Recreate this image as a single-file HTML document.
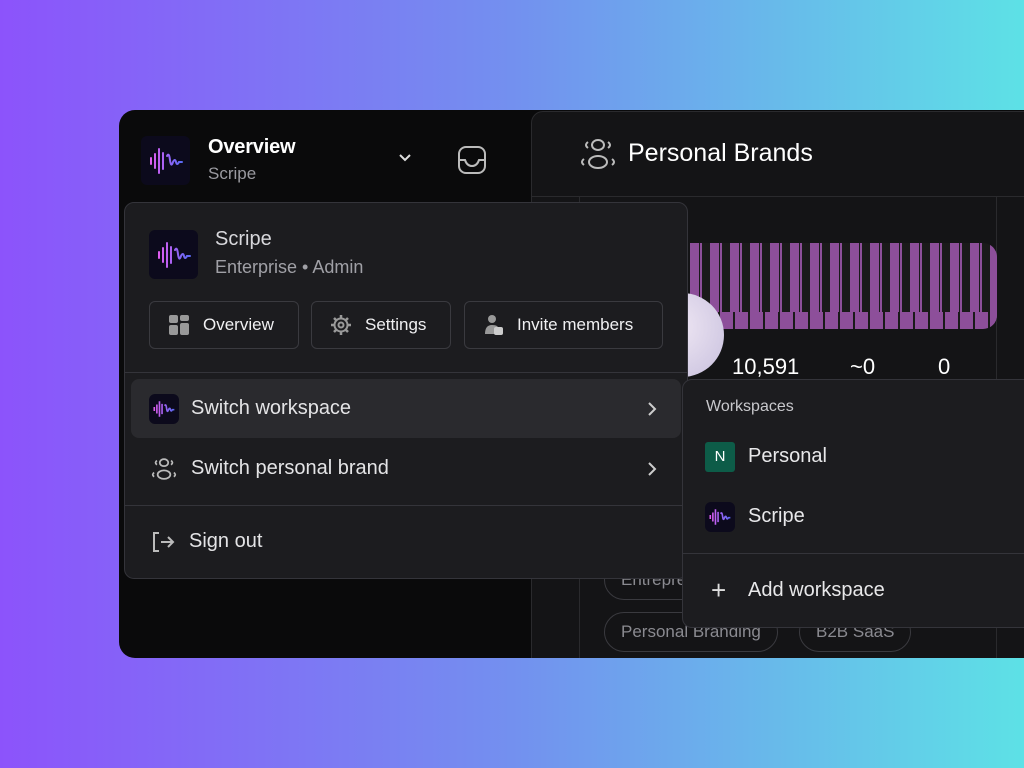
<!DOCTYPE html>
<html><head><meta charset="utf-8"><style>
*{box-sizing:border-box;margin:0;padding:0}
body{width:1024px;height:768px;overflow:hidden;background:linear-gradient(90deg,#8c53fb 0%,#7390ef 50%,#5de1e6 100%);font-family:"Liberation Sans",sans-serif;position:relative;color:#e8e8ea}
.abs{position:absolute}
.win{left:119px;top:110px;width:940px;height:548px;background:#0a0a0b;border-radius:16px;overflow:hidden}
.logo{background:#0c0a1c;border-radius:6px;display:flex;align-items:center;justify-content:center}
.right{left:412px;top:1px;width:520px;height:560px;background:#141416;border:1px solid #2a2a2d;border-radius:12px 0 0 0}
.card{left:460px;top:87px;width:418px;height:470px;border-left:1px solid #2a2a2d;border-right:1px solid #2a2a2d}
.menu{left:124px;top:202px;width:564px;height:377px;background:#1c1c1f;border:1px solid #34343a;border-radius:10px}
.btn{position:absolute;top:98px;height:48px;border:1px solid #3a3a3f;border-radius:6px;display:flex;align-items:center;font-size:17px;color:#f0f0f2}
.row{position:absolute;left:6px;width:550px;height:59px;border-radius:8px;display:flex;align-items:center;font-size:20px;color:#e4e4e6}
.sub{left:682px;top:379px;width:360px;height:249px;background:#1c1c1f;border:1px solid #34343a;border-radius:10px 0 0 10px}
.tag{position:absolute;height:40px;border:1px solid #3a3a3f;border-radius:20px;color:#8a8a90;font-size:17px;padding:0 16px;line-height:38px}
</style></head><body>
<div class="abs win">
<div class="abs right"></div>
<div class="abs" style="left:413px;top:86px;width:500px;height:1px;background:#2a2a2d"></div>
<div class="abs card"></div>
<div class="abs" style="left:571px;top:133px;width:307px;height:86px;border-radius:0 14px 14px 0;overflow:hidden;background:repeating-linear-gradient(90deg,#8d4f9a 0 9px,#1a1a1a 9px 10px,#8d4f9a 10px 12px,#1a1a1a 12px 20px);"></div>
<div class="abs" style="left:571px;top:202px;width:307px;height:17px;border-radius:0 0 14px 0;background:repeating-linear-gradient(90deg,#8d4f9a 0 13px,#1a1a1a 13px 15px)"></div>
<div class="abs" style="left:521px;top:183px;width:84px;height:84px;border-radius:50%;background:radial-gradient(circle at 40% 40%,#f0e8f4,#c8c0de)"></div>
<div class="abs" style="left:613px;top:244px;font-size:22px;color:#fff">10,591</div>
<div class="abs" style="left:731px;top:244px;font-size:22px;color:#fff">~0</div>
<div class="abs" style="left:819px;top:244px;font-size:22px;color:#fff">0</div>
<div class="tag" style="left:485px;top:450px">Entrepreneur</div>
<div class="tag" style="left:485px;top:502px">Personal Branding</div>
<div class="tag" style="left:680px;top:502px">B2B SaaS</div>
</div>
<!-- top left header -->
<div class="abs logo" style="left:141px;top:136px;width:49px;height:49px">
<svg width="34" height="26" viewBox="0 0 34 26"><defs><linearGradient id="g" x1="0" x2="1"><stop offset="0" stop-color="#e05cf0"/><stop offset="1" stop-color="#5a6af5"/></linearGradient></defs><path d="M2 10v6M6 6v14M10 1v24M14 5v16M18 8q2-4 3 4t3 2q2-4 3 0t3 0h3" stroke="url(#g)" stroke-width="2" fill="none" stroke-linecap="round"/></svg></div>
<div class="abs" style="left:208px;top:136px;font-size:20px;color:#fff;font-weight:bold;letter-spacing:-0.2px">Overview</div>
<div class="abs" style="left:208px;top:164px;font-size:17px;color:#9a9aa0">Scripe</div>
<svg class="abs" style="left:398px;top:152px" width="14" height="12" viewBox="0 0 14 12"><path d="M2 3l5 5 5-5" stroke="#ddd" stroke-width="2" fill="none"/></svg>
<svg class="abs" style="left:457px;top:145px" width="30" height="30" viewBox="0 0 30 30"><rect x="2" y="2" width="26" height="26" rx="7" stroke="#bbb" stroke-width="2" fill="none"/><path d="M2 15h6q2 6 7 6t7-6h6" stroke="#bbb" stroke-width="2" fill="none"/></svg>
<svg class="abs" style="left:580px;top:137px" width="36" height="34" viewBox="0 0 36 34"><g stroke="#bbb" stroke-width="2" fill="none"><ellipse cx="18" cy="8" rx="6" ry="5"/><ellipse cx="18" cy="25" rx="9" ry="6"/><path d="M8 5q-4 3 0 6M28 5q4 3 0 6M4 22q-4 3 0 6M32 22q4 3 0 6"/></g></svg>
<div class="abs" style="left:628px;top:139px;font-size:25px;color:#fff">Personal Brands</div>
<!-- menu -->
<div class="abs menu">
<div class="abs logo" style="left:24px;top:27px;width:49px;height:49px"><svg width="34" height="26" viewBox="0 0 34 26"><path d="M2 10v6M6 6v14M10 1v24M14 5v16M18 8q2-4 3 4t3 2q2-4 3 0t3 0h3" stroke="url(#g)" stroke-width="2" fill="none" stroke-linecap="round"/></svg></div>
<div class="abs" style="left:90px;top:25px;font-size:20px;color:#d8d8dc">Scripe</div>
<div class="abs" style="left:90px;top:54px;font-size:18px;color:#a0a0a6">Enterprise • Admin</div>
<div class="btn" style="left:24px;width:150px"><svg style="margin:0 14px 0 19px" width="20" height="20" viewBox="0 0 20 20" fill="#999"><rect x="0" y="0" width="9" height="8" rx="2"/><rect x="11" y="0" width="9" height="6" rx="2"/><rect x="0" y="10" width="9" height="10" rx="2"/><rect x="11" y="8" width="9" height="12" rx="2"/></svg>Overview</div>
<div class="btn" style="left:186px;width:140px"><svg style="margin:0 14px 0 19px" width="20" height="20" viewBox="0 0 20 20"><circle cx="10" cy="10" r="6.5" stroke="#999" stroke-width="2" fill="none"/><circle cx="10" cy="10" r="2.5" stroke="#999" stroke-width="2" fill="none"/><path d="M10 0v3M10 17v3M0 10h3M17 10h3M3 3l2 2M15 15l2 2M17 3l-2 2M5 15l-2 2" stroke="#999" stroke-width="2.5"/></svg>Settings</div>
<div class="btn" style="left:339px;width:199px"><svg style="margin:0 14px 0 20px" width="18" height="22" viewBox="0 0 18 22" fill="#999"><circle cx="7" cy="5" r="4"/><path d="M0 20q0-9 7-9t6 4v5z"/><rect x="9" y="13" width="9" height="8" rx="2" fill="#ccc"/></svg>Invite members</div>
<div class="abs" style="left:0;top:169px;width:562px;height:1px;background:#34343a"></div>
<div class="row" style="top:176px;background:#2a2a2e"><div class="logo" style="margin:0 12px 0 18px;width:30px;height:30px"><svg width="22" height="18" viewBox="0 0 34 26"><path d="M2 10v6M6 6v14M10 1v24M14 5v16M18 8q2-4 3 4t3 2q2-4 3 0t3 0h3" stroke="url(#g)" stroke-width="2.5" fill="none"/></svg></div>Switch workspace<svg style="position:absolute;right:24px" width="10" height="16" viewBox="0 0 10 16"><path d="M2 2l6 6-6 6" stroke="#ccc" stroke-width="2" fill="none"/></svg></div>
<div class="row" style="top:236px"><svg style="margin:0 14px 0 20px" width="26" height="24" viewBox="0 0 36 34"><g stroke="#bbb" stroke-width="2.5" fill="none"><ellipse cx="18" cy="8" rx="6" ry="5"/><ellipse cx="18" cy="25" rx="9" ry="6"/><path d="M8 5q-4 3 0 6M28 5q4 3 0 6M4 22q-4 3 0 6M32 22q4 3 0 6"/></g></svg>Switch personal brand<svg style="position:absolute;right:24px" width="10" height="16" viewBox="0 0 10 16"><path d="M2 2l6 6-6 6" stroke="#ccc" stroke-width="2" fill="none"/></svg></div>
<div class="abs" style="left:0;top:302px;width:562px;height:1px;background:#34343a"></div>
<div class="row" style="top:309px"><svg style="margin:0 14px 0 20px" width="24" height="22" viewBox="0 0 24 22"><path d="M8 2H3v18h5M10 11h12M17 6l5 5-5 5" stroke="#bbb" stroke-width="2" fill="none"/></svg>Sign out</div>
</div>
<!-- submenu -->
<div class="abs sub">
<div class="abs" style="left:23px;top:18px;font-size:16px;color:#c8c8cc">Workspaces</div>
<div class="abs" style="left:22px;top:62px;width:30px;height:30px;background:#0d5c48;border-radius:3px;color:#fff;font-size:15px;text-align:center;line-height:30px">N</div>
<div class="abs" style="left:65px;top:65px;font-size:20px;color:#e8e8ea">Personal</div>
<div class="abs logo" style="left:22px;top:122px;width:30px;height:30px"><svg width="22" height="18" viewBox="0 0 34 26"><path d="M2 10v6M6 6v14M10 1v24M14 5v16M18 8q2-4 3 4t3 2q2-4 3 0t3 0h3" stroke="url(#g)" stroke-width="2.5" fill="none"/></svg></div>
<div class="abs" style="left:65px;top:125px;font-size:20px;color:#e8e8ea">Scripe</div>
<div class="abs" style="left:0;top:173px;width:360px;height:1px;background:#34343a"></div>
<div class="abs" style="left:28px;top:199px;font-size:26px;color:#ddd;line-height:22px">+</div>
<div class="abs" style="left:65px;top:199px;font-size:20px;color:#e8e8ea">Add workspace</div>
</div>
</body></html>
